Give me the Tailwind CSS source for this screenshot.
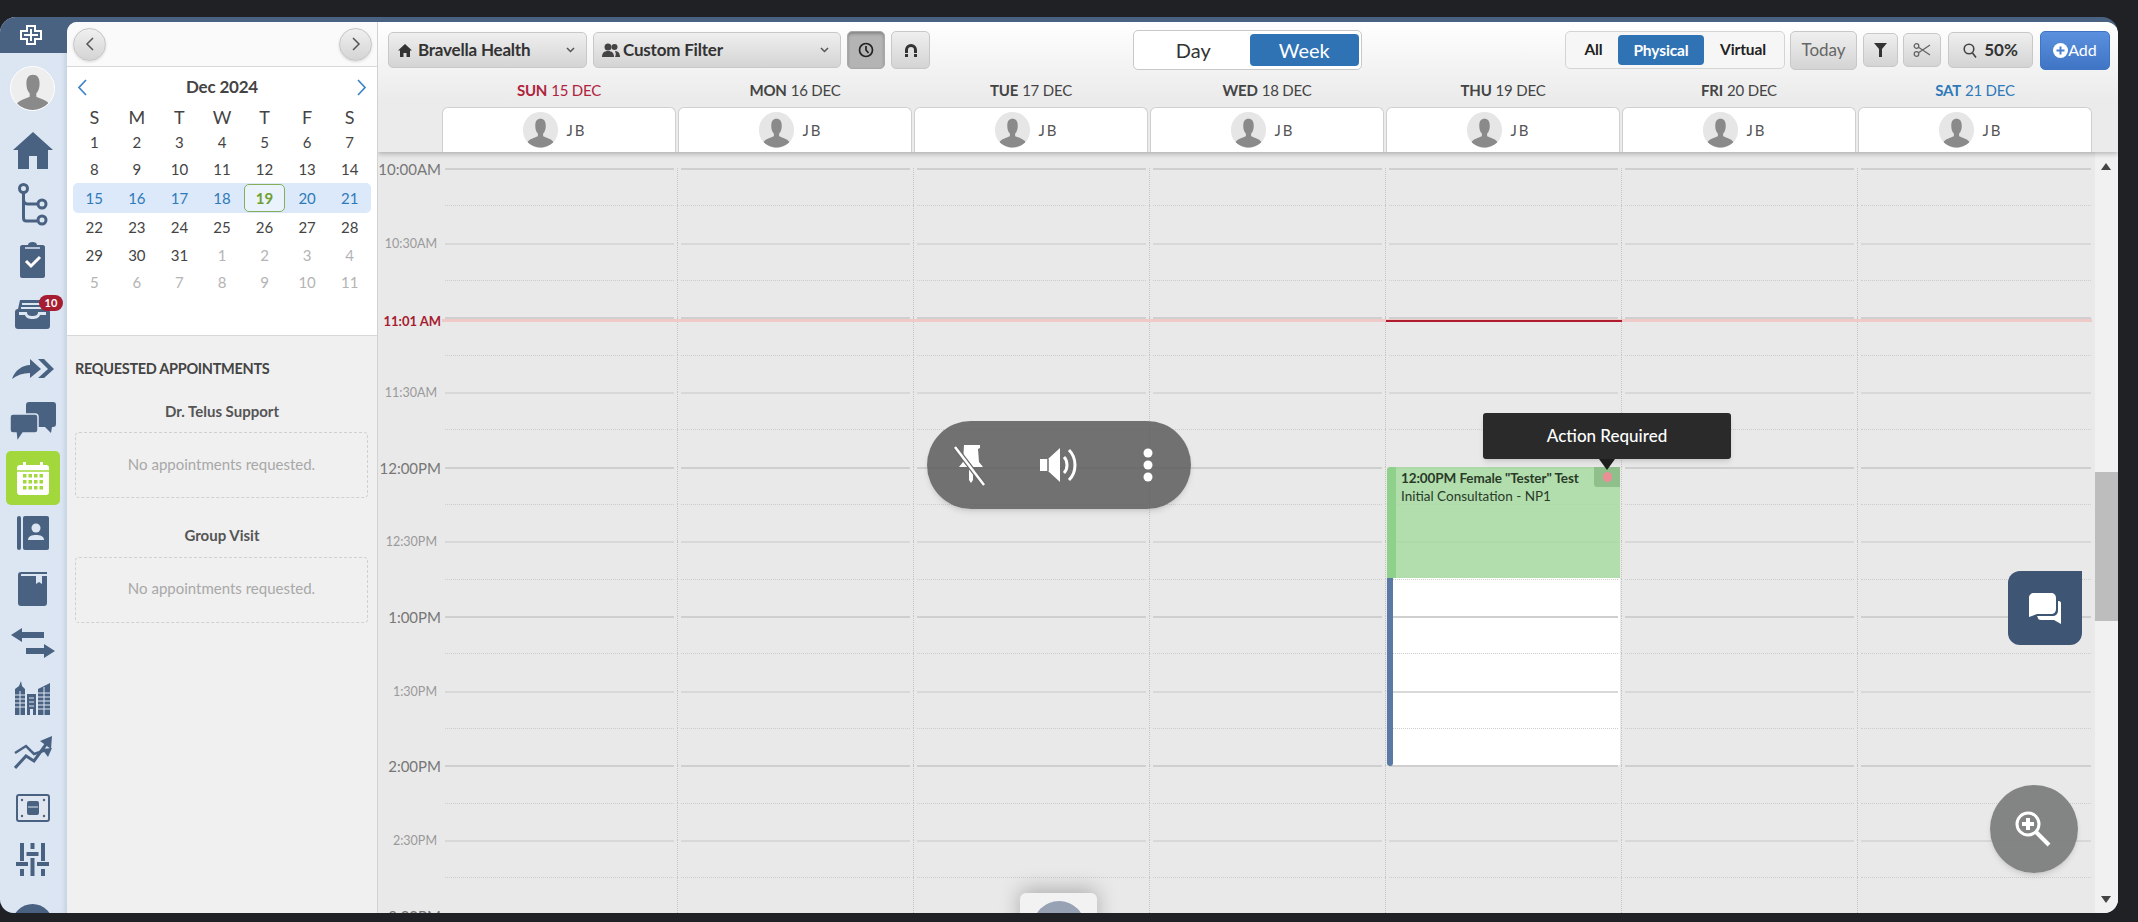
<!DOCTYPE html>
<html lang="en">
<head>
    <meta charset="UTF-8">
    <title>Schedule</title>
    <script src="https://cdn.jsdelivr.net/npm/@tailwindcss/browser@4"></script>
</head>
<body class="bg-[#1f2125] h-[922px] overflow-hidden font-[family-name:Lato,sans-serif] text-[#444]">

    <svg class="hidden">
        <symbol id="person" viewBox="0 0 40 40">
            <path d="M20 7c4 0 6 3 6 8 0 4-1 7-3 9v3c4 2 10 3 12 7-3 3-9 6-15 6S8 37 5 34c2-4 8-5 12-7v-3c-2-2-3-5-3-9 0-5 2-8 6-8z" fill="#8a8a8a"/>
        </symbol>
    </svg>

    <div class="pt-[17px] w-[2118px]">
        <div class="flex h-[896px] w-[2118px] rounded-t-[16px] rounded-b-[14px] overflow-hidden bg-[#4a6282]">

            <!-- Sidebar -->
            <div class="w-[67px] shrink-0 flex flex-col items-center pr-[2px] bg-[#dce6f3] overflow-hidden shadow-[inset_-5px_0_6px_-4px_#b9c6d8]">
                <div class="w-[67px] h-[36px] shrink-0 -mr-[2px] bg-[#4a6282] flex items-center justify-center pr-[6px]">
                    <svg width="22" height="20" viewBox="0 0 22 20"><path d="M7 1h8v5h6v8h-6v5H7v-5H1V6h6z" fill="none" stroke="#fff" stroke-width="2"/><path d="M11 4v12M4 10h14" stroke="#fff" stroke-width="2"/></svg>
                </div>
                <div class="mt-[13px] w-[45px] h-[45px] shrink-0 rounded-full bg-[#eeeeee] border border-white overflow-hidden">
                    <svg width="44" height="44"><use href="#person"/></svg>
                </div>
                <svg class="mt-[21px] shrink-0" width="40" height="37" viewBox="0 0 40 37"><path d="M20 0l20 18h-5v19H24V24h-8v13H5V18H0z" fill="#4a6282"/></svg>
                <svg class="mt-[14px] shrink-0" width="30" height="43" viewBox="0 0 30 43" fill="none" stroke="#4a6282" stroke-width="3"><circle cx="5.500" cy="5.500" r="4"/><circle cx="24" cy="21" r="4"/><circle cx="24" cy="37" r="4"/><path d="M5.500 10v25c0 2 1 3 3 3h11M5.500 16c0 3 1 5 4 5h10.500"/></svg>
                <svg class="mt-[16px] shrink-0" width="25" height="36" viewBox="0 0 25 36"><path d="M2 3h6c0-2 2-3 4.500-3S17 1 17 3h6c1 0 2 1 2 2v29c0 1-1 2-2 2H2c-1 0-2-1-2-2V5c0-1 1-2 2-2z" fill="#4a6282"/><path d="M6 19l5 5 9-9" fill="none" stroke="#fff" stroke-width="3"/><path d="M5 6h15" stroke="#dce6f3" stroke-width="1.500"/></svg>
                <div class="relative mt-[22px] shrink-0 w-[35px] h-[29px]">
                    <svg width="35" height="29" viewBox="0 0 35 29"><path d="M5 0h25l2 9c2 0 3 1 3 3v14c0 2-1 3-3 3H3c-2 0-3-1-3-3V12c0-2 1-3 3-3z" fill="#4a6282"/><path d="M7 4h21M6 8h23" stroke="#dce6f3" stroke-width="1.800"/><path d="M4 12h8c0 3 2 4 5.500 4s5.500-1 5.500-4h8v3H25c-1 3-4 4-7.500 4S11 18 10 15H4z" fill="#dce6f3"/></svg>
                    <span class="absolute left-[24px] top-[-5px] w-[24px] h-[16px] rounded-full bg-[#a61c30] text-white text-[11px] font-bold leading-[16px] text-center">10</span>
                </div>
                <svg class="mt-[30px] shrink-0" width="42" height="20" viewBox="0 0 42 20"><path d="M0 20C3 11 11 6 18 6V0l11 10-11 9v-5C11 14 5 16 0 20z" fill="#4a6282"/><path d="M26 0h6l10 10-10 9h-6l10-9z" fill="#4a6282"/></svg>
                <svg class="mt-[23px] shrink-0" width="46" height="41" viewBox="0 0 46 41"><path d="M19 0h24c2 0 3 1 3 3v19c0 2-1 3-3 3h-1l-1 6-6-6H19c-2 0-3-1-3-3V3c0-2 1-3 3-3z" fill="#4a6282"/><path d="M3 12h22c2 0 3 1 3 3v13c0 2-1 3-3 3H13l-6 9-1-9H3c-2 0-3-1-3-3V15c0-2 1-3 3-3z" fill="#4a6282" stroke="#dce6f3" stroke-width="1.500"/></svg>
                <div class="mt-[8px] w-[54px] h-[54px] shrink-0 rounded-[5px] bg-[#a2d83c] flex items-center justify-center">
                    <svg width="32" height="33" viewBox="0 0 32 33"><rect y="3" width="32" height="30" rx="3" fill="#fff"/><rect x="6" width="3" height="6" fill="#fff"/><rect x="23" width="3" height="6" fill="#fff"/><path d="M0 9h32" stroke="#a2d83c" stroke-width="1.500"/><g fill="#a2d83c"><rect x="6" y="12" width="3.500" height="3.500"/><rect x="11.500" y="12" width="3.500" height="3.500"/><rect x="17" y="12" width="3.500" height="3.500"/><rect x="22.500" y="12" width="3.500" height="3.500"/><rect x="6" y="18" width="3.500" height="3.500"/><rect x="11.500" y="18" width="3.500" height="3.500"/><rect x="17" y="18" width="3.500" height="3.500"/><rect x="22.500" y="18" width="3.500" height="3.500"/><rect x="6" y="24" width="3.500" height="3.500"/><rect x="11.500" y="24" width="3.500" height="3.500"/><rect x="17" y="24" width="3.500" height="3.500"/><rect x="22.500" y="24" width="3.500" height="3.500"/></g></svg>
                </div>
                <svg class="mt-[11px] shrink-0" width="32" height="34" viewBox="0 0 32 34"><rect width="4" height="34" rx="2" fill="#4a6282"/><rect x="6" width="26" height="34" rx="2" fill="#4a6282"/><circle cx="19" cy="12" r="4.500" fill="#dce6f3"/><path d="M11 24c0-4 4-5 8-5s8 1 8 5z" fill="#dce6f3"/></svg>
                <svg class="mt-[22px] shrink-0" width="29" height="34" viewBox="0 0 29 34"><path d="M3 0h26v2H4c-1 0-1 0-1 1v1h26v27c0 2-1 3-3 3H3c-2 0-3-1-3-3V3c0-2 1-3 3-3z" fill="#4a6282"/><path d="M18 4h6v8l-3-2-3 2z" fill="#dce6f3"/></svg>
                <svg class="mt-[22px] shrink-0" width="44" height="30" viewBox="0 0 44 30" fill="#4a6282"><path d="M0 7l11-7v4h22v6H11v4zM44 23l-11-7v4H15v6h18v4z"/></svg>
                <svg class="mt-[23px] shrink-0" width="35" height="34" viewBox="0 0 35 34" fill="#4a6282"><path d="M6 0l1 5 3 3v26H0V8l4-3zM12 13h9v21h-3v-6h-3v6h-3zM23 8l12-6v32H23z"/><g stroke="#dce6f3" stroke-width="1"><path d="M0 14h10M0 18h10M0 22h10M0 26h10M5 10v24M14 17h5M14 21h5M14 25h5M23 12h12M23 16h12M23 20h12M23 24h12M23 28h12M29 6v28"/></g></svg>
                <svg class="mt-[21px] shrink-0" width="38" height="33" viewBox="0 0 38 33" fill="none" stroke="#4a6282" stroke-width="3"><path d="M1 32l11-12 8 5 13-18"/><path d="M1 17l11-7 8 8 12-4" stroke-width="2.500"/><path d="M26 5l12-5-1 13zM28 13l10-1-4 9z" fill="#4a6282" stroke="none"/></svg>
                <svg class="mt-[25px] shrink-0" width="34" height="28" viewBox="0 0 34 28"><rect x="1" y="1" width="32" height="26" rx="2" fill="#dfe6ef" stroke="#4a6282" stroke-width="2"/><rect x="11" y="7" width="12" height="14" rx="2" fill="#4a6282"/><path d="M12 13h10" stroke="#dfe6ef"/><g fill="#4a6282"><circle cx="6" cy="6" r="1.200"/><circle cx="28" cy="6" r="1.200"/><circle cx="6" cy="22" r="1.200"/><circle cx="28" cy="22" r="1.200"/></g></svg>
                <svg class="mt-[21px] shrink-0" width="33" height="33" viewBox="0 0 33 33" fill="#4a6282"><rect x="4" width="4" height="18"/><rect x="0" y="19" width="12" height="4"/><rect x="4" y="26" width="4" height="7"/><rect x="14.500" width="4" height="6"/><rect x="10.500" y="9" width="12" height="4"/><rect x="14.500" y="15" width="4" height="18"/><rect x="25" width="4" height="18"/><rect x="21" y="19" width="12" height="4"/><rect x="25" y="26" width="4" height="7"/></svg>
                <div class="mt-[28px] w-[41px] h-[41px] shrink-0 rounded-full bg-[#4a6282]"></div>
            </div>

            <!-- Left panel -->
            <div class="w-[311px] shrink-0 mt-[5px] rounded-tl-[10px] bg-[#f0f0f0] border-r border-[#d2d2d2] overflow-hidden">
                <div class="h-[45px] flex items-center justify-between pl-[6px] pr-[5px] bg-[#fafafa] border-b border-[#d8d8d8]">
                    <button class="w-[33px] h-[33px] rounded-full bg-gradient-to-b from-[#f0f0f0] to-[#d4d4d4] border border-[#c4c4c4] flex items-center justify-center shadow-sm">
                        <svg width="10" height="16" viewBox="0 0 10 16" fill="none" stroke="#555" stroke-width="1.500"><path d="M8 2L2 8l6 6"/></svg>
                    </button>
                    <button class="w-[33px] h-[33px] rounded-full bg-gradient-to-b from-[#f0f0f0] to-[#d4d4d4] border border-[#c4c4c4] flex items-center justify-center shadow-sm">
                        <svg width="10" height="16" viewBox="0 0 10 16" fill="none" stroke="#555" stroke-width="1.500"><path d="M2 2l6 6-6 6"/></svg>
                    </button>
                </div>
                <div class="h-[269px] bg-white border-b border-[#d8d8d8] px-[6px]">
                    <div class="h-[38px] pt-[2px] flex items-center justify-between px-[4px]">
                        <svg width="11" height="17" viewBox="0 0 11 17" fill="none" stroke="#3d85c6" stroke-width="1.700"><path d="M9 1L2 8.500 9 16"/></svg>
                        <span class="text-[17px] font-bold text-[#444] tracking-[-0.2px]">Dec 2024</span>
                        <svg width="11" height="17" viewBox="0 0 11 17" fill="none" stroke="#3d85c6" stroke-width="1.700"><path d="M2 1l7 7.500L2 16"/></svg>
                    </div>
                    <div class="grid grid-cols-7 w-[298px] text-center text-[18px] leading-[24px] text-[#444] h-[24px]">
                        <span>S</span><span>M</span><span>T</span><span>W</span><span>T</span><span>F</span><span>S</span>
                    </div>
                    <div class="grid grid-cols-7 w-[298px] text-center text-[15px] leading-[27px] h-[27px] text-[#444]">
                        <span>1</span><span>2</span><span>3</span><span>4</span><span>5</span><span>6</span><span>7</span>
                    </div>
                    <div class="grid grid-cols-7 w-[298px] text-center text-[15px] leading-[27px] h-[27px] text-[#444]">
                        <span>8</span><span>9</span><span>10</span><span>11</span><span>12</span><span>13</span><span>14</span>
                    </div>
                    <div class="grid grid-cols-7 w-[298px] text-center text-[15px] leading-[30px] h-[30px] text-[#2f7ab8] bg-[#dce9fa] rounded-[5px]">
                        <span>15</span><span>16</span><span>17</span><span>18</span>
                        <span class="mx-[1px] h-[28px] mt-[1px] leading-[26px] rounded-[5px] border border-[#85ad5c] bg-white/40 font-bold text-[#6fa02f]">19</span>
                        <span>20</span><span>21</span>
                    </div>
                    <div class="grid grid-cols-7 w-[298px] text-center text-[15px] leading-[28px] h-[28px] text-[#444]">
                        <span>22</span><span>23</span><span>24</span><span>25</span><span>26</span><span>27</span><span>28</span>
                    </div>
                    <div class="grid grid-cols-7 w-[298px] text-center text-[15px] leading-[28px] h-[28px] text-[#444]">
                        <span>29</span><span>30</span><span>31</span><span class="text-[#b4b4b4]">1</span><span class="text-[#b4b4b4]">2</span><span class="text-[#b4b4b4]">3</span><span class="text-[#b4b4b4]">4</span>
                    </div>
                    <div class="grid grid-cols-7 w-[298px] text-center text-[15px] leading-[26px] h-[26px] text-[#b4b4b4]">
                        <span>5</span><span>6</span><span>7</span><span>8</span><span>9</span><span>10</span><span>11</span>
                    </div>
                </div>
                <div class="px-[8px] pt-[24px]">
                    <h3 class="text-[14.500px] leading-[18px] font-bold text-[#444] tracking-[-0.3px] whitespace-nowrap">REQUESTED APPOINTMENTS</h3>
                    <h4 class="mt-[24px] text-[15px] leading-[18px] font-bold text-[#555] text-center">Dr. Telus Support</h4>
                    <div class="mt-[12px] h-[66px] w-[293px] border border-dashed border-[#d0d0d0] rounded-[4px] flex items-center justify-center text-[15px] text-[#a8a8a8] pb-[2px]">No appointments requested.</div>
                    <h4 class="mt-[28px] text-[15px] leading-[18px] font-bold text-[#555] text-center">Group Visit</h4>
                    <div class="mt-[13px] h-[66px] w-[293px] border border-dashed border-[#d0d0d0] rounded-[4px] flex items-center justify-center text-[15px] text-[#a8a8a8] pb-[3px]">No appointments requested.</div>
                </div>
            </div>

            <!-- Main -->
            <div class="flex-1 mt-[5px] flex flex-col bg-[#ebebeb] min-w-0 rounded-tr-[12px] overflow-hidden">
                <div class="h-[130px] shrink-0 bg-gradient-to-b from-white from-0% to-[#ebebeb] to-60% relative z-10 shadow-[0_2px_5px_rgba(0,0,0,0.25)]">
                    <div class="h-[56px] pl-[10px] flex items-center text-[#333]">
                        <button class="w-[199px] h-[36px] rounded-[5px] border border-[#c8c8c8] bg-gradient-to-b from-[#efefef] to-[#d4d4d4] flex items-center pl-[9px] pr-[11px] text-[17px] font-bold tracking-[-0.2px]">
                            <svg class="mr-[6px]" width="14" height="13" viewBox="0 0 14 13" fill="#333"><path d="M7 0l7 6.500h-2V13H8.500V9h-3v4H2V6.500H0z"/></svg>
                            Bravella Health
                            <svg class="ml-auto" width="9" height="6" viewBox="0 0 9 6" fill="none" stroke="#555" stroke-width="1.500"><path d="M1 1l3.500 3.500L8 1"/></svg>
                        </button>
                        <button class="ml-[6px] w-[248px] h-[36px] rounded-[5px] border border-[#c8c8c8] bg-gradient-to-b from-[#efefef] to-[#d4d4d4] flex items-center pl-[8px] pr-[11px] text-[17px] font-bold tracking-[-0.2px]">
                            <svg class="mr-[3px]" width="18" height="14" viewBox="0 0 18 14" fill="#444"><circle cx="6" cy="4" r="3.500"/><path d="M0 14c0-4 2-6 6-6s6 2 6 6z"/><circle cx="12.500" cy="4" r="3"/><path d="M13 14h5c0-4-2-6-5-6 1 2 1 4 0 6z"/></svg>
                            Custom Filter
                            <svg class="ml-auto" width="9" height="6" viewBox="0 0 9 6" fill="none" stroke="#555" stroke-width="1.500"><path d="M1 1l3.500 3.500L8 1"/></svg>
                        </button>
                        <button class="ml-[6px] w-[38px] h-[38px] rounded-[5px] border border-[#a8a8a8] bg-[#b4b4b4] shadow-[inset_0_2px_3px_rgba(0,0,0,0.25)] flex items-center justify-center">
                            <svg width="16" height="16" viewBox="0 0 16 16" fill="none" stroke="#222" stroke-width="1.700"><circle cx="8" cy="8" r="6.500"/><path d="M8 4v4l2.500 3"/></svg>
                        </button>
                        <button class="ml-[6px] w-[39px] h-[38px] rounded-[5px] border border-[#c8c8c8] bg-gradient-to-b from-[#efefef] to-[#d4d4d4] flex items-center justify-center">
                            <svg width="14" height="15" viewBox="0 0 14 15" fill="none"><path d="M2.500 10V7a4.500 4.500 0 019 0v3" stroke="#333" stroke-width="3"/><path d="M1 11h3v3H1zM10 11h3v3h-3z" fill="#333"/></svg>
                        </button>
                        <div class="ml-[203px] w-[229px] h-[40px] rounded-[5px] border border-[#c8c8c8] bg-white flex items-center pl-[3px] pr-[2px] text-[20px]">
                            <span class="w-[113px] text-center text-[#333]">Day</span>
                            <span class="w-[110px] h-[32px] leading-[32px] rounded-[4px] bg-[#2f73b5] text-center text-white">Week</span>
                        </div>
                        <div class="ml-[203px] w-[220px] h-[38px] rounded-[5px] border border-[#d4d4d4] bg-[#f6f6f6] flex items-center pl-[3px] text-[15.500px] font-bold text-[#222] tracking-[-0.1px]">
                            <span class="w-[49px] text-center">All</span>
                            <span class="w-[86px] h-[30px] leading-[30px] rounded-[4px] bg-[#2f73b5] text-center text-white">Physical</span>
                            <span class="w-[78px] text-center">Virtual</span>
                        </div>
                        <button class="ml-[5px] w-[67px] h-[39px] rounded-[5px] border border-[#c8c8c8] bg-gradient-to-b from-[#efefef] to-[#d4d4d4] text-[17px] text-[#666]">Today</button>
                        <button class="ml-[6px] w-[35px] h-[34px] rounded-[5px] border border-[#c8c8c8] bg-gradient-to-b from-[#efefef] to-[#d4d4d4] flex items-center justify-center">
                            <svg width="13" height="14" viewBox="0 0 13 14" fill="#333"><path d="M0 0h13L8 6v8H5V6z"/></svg>
                        </button>
                        <button class="ml-[5px] w-[38px] h-[34px] rounded-[5px] border border-[#c8c8c8] bg-gradient-to-b from-[#efefef] to-[#d4d4d4] flex items-center justify-center">
                            <svg width="18" height="14" viewBox="0 0 18 14" fill="none" stroke="#666" stroke-width="1.300"><circle cx="3.500" cy="3" r="2.300"/><circle cx="3.500" cy="11" r="2.300"/><path d="M5.500 4.200L17 12M5.500 9.800L17 2"/></svg>
                        </button>
                        <button class="ml-[7px] w-[85px] h-[36px] rounded-[5px] border border-[#c8c8c8] bg-gradient-to-b from-[#efefef] to-[#d4d4d4] flex items-center justify-center text-[17px] font-bold text-[#333]">
                            <svg class="mr-[7px]" width="14" height="15" viewBox="0 0 14 15" fill="none" stroke="#444" stroke-width="1.600"><circle cx="6" cy="6" r="4.800"/><path d="M9.500 10l3.500 4.500"/></svg>
                            50%
                        </button>
                        <button class="ml-[7px] w-[70px] h-[39px] rounded-[5px] border border-[#3f75c4] bg-gradient-to-b from-[#5a90de] to-[#3f75c4] flex items-center justify-center text-[16px] text-white">
                            <svg width="15" height="15" viewBox="0 0 15 15"><circle cx="7.500" cy="7.500" r="7.500" fill="#fff"/><path d="M7.500 3.500v8M3.500 7.500h8" stroke="#4a80d0" stroke-width="2"/></svg>
                            Add
                        </button>
                    </div>
                    <div class="h-[29px] pl-[63px] pb-[5px] flex text-[15px] tracking-[-0.2px] text-[#444]">
                        <div class="w-[236px] flex items-center justify-center gap-[4px] text-[#b0233c]"><b>SUN</b> 15 DEC</div>
                        <div class="w-[236px] flex items-center justify-center gap-[4px]"><b>MON</b> 16 DEC</div>
                        <div class="w-[236px] flex items-center justify-center gap-[4px]"><b>TUE</b> 17 DEC</div>
                        <div class="w-[236px] flex items-center justify-center gap-[4px]"><b>WED</b> 18 DEC</div>
                        <div class="w-[236px] flex items-center justify-center gap-[4px]"><b>THU</b> 19 DEC</div>
                        <div class="w-[236px] flex items-center justify-center gap-[4px]"><b>FRI</b> 20 DEC</div>
                        <div class="w-[236px] flex items-center justify-center gap-[4px] text-[#2f7ab8]"><b>SAT</b> 21 DEC</div>
                    </div>
                    <div id="tabs" class="h-[45px] pl-[64px] flex gap-[2px]"></div>
                </div>

                <div class="flex-1 flex min-h-0">
                    <div id="grid" class="relative w-[1717px] shrink-0 pt-[16px] overflow-hidden bg-[#e9e9e9]">
                        <!-- empty slot sits under the grid lines -->
                        <div class="absolute left-[1009px] top-[426px] w-[233px] h-[188px] bg-white rounded-b-[3px]"></div>

                        <div id="rows" class="relative"></div>

                        <!-- now line -->
                        <div class="absolute left-[64px] top-[167px] w-[1650px] h-[3px] bg-[#f0c9c9]"></div>
                        <div class="absolute left-[1008px] top-[168px] w-[236px] h-[2px] bg-[#b01c2e]"></div>

                        <div class="absolute left-[1009px] top-[426px] w-[6px] h-[188px] bg-[#5a7aa5] rounded-b-[3px]"></div>

                        <!-- appointment -->
                        <div class="absolute left-[1009px] top-[315px] w-[233px] h-[111px] bg-[#a4db9f]/80 rounded-t-[3px] border-l-[9px] border-[#8fd08a] pl-[5px] pt-[2px] text-[#2a3a28]">
                            <div class="text-[13.500px] leading-[18px] font-bold tracking-[-0.1px] whitespace-nowrap">12:00PM Female "Tester" Test</div>
                            <div class="text-[13.500px] leading-[18px] whitespace-nowrap">Initial Consultation - NP1</div>
                        </div>
                        <div class="absolute left-[1216px] top-[315px] w-[26px] h-[20px] bg-[#8fc08c] rounded-bl-[3px] flex items-center justify-center">
                            <span class="w-[9px] h-[10px] rounded-full bg-[#ea8f93]"></span>
                        </div>

                        <!-- tooltip -->
                        <div class="absolute left-[1105px] top-[261px] w-[248px] h-[46px] rounded-[3px] bg-[#2a2a2a] text-white text-[17px] font-medium flex items-center justify-center shadow-md">Action Required</div>
                        <div class="absolute left-[1221px] top-[307px] w-0 h-0 border-x-[8px] border-x-transparent border-t-[11px] border-t-[#1e1e1e]"></div>

                        <!-- floating pill -->
                        <div class="absolute left-[549px] top-[269px] w-[264px] h-[88px] rounded-[44px] bg-[#5c5c5c]/85 shadow-md flex items-center">
                            <svg class="ml-[25px]" width="36" height="42" viewBox="0 0 36 42" fill="#fff"><path d="M12 1h16v3l-2 1 1 13 4 5H21v13l-2 3-2-3V23H7l4-5z"/><path d="M3 3l29 38" stroke="#6a6a6a" stroke-width="5"/><path d="M3 3l29 38" stroke="#fff" stroke-width="2.500"/></svg>
                            <svg class="ml-[52px]" width="38" height="36" viewBox="0 0 38 36"><path d="M0 12h8L20 1v34L8 24H0z" fill="#fff"/><path d="M8 12v12" stroke="#6a6a6a" stroke-width="1.500"/><path d="M24 10c4 4 4 12 0 16M29 3c8 8 8 22 0 30" fill="none" stroke="#fff" stroke-width="3"/></svg>
                            <svg class="ml-[65px]" width="10" height="34" viewBox="0 0 10 34" fill="#fff"><circle cx="5" cy="5" r="4.500"/><circle cx="5" cy="17" r="4.500"/><circle cx="5" cy="29" r="4.500"/></svg>
                        </div>

                        <!-- chat button -->
                        <div class="absolute left-[1630px] top-[419px] w-[74px] h-[74px] rounded-[12px] rounded-tr-none bg-[#3f5574] flex items-center justify-center">
                            <svg width="32" height="31" viewBox="0 0 32 31"><path d="M5 0h17c3 0 5 2 5 5v11c0 3-2 5-5 5H8l-8 3V5c0-3 2-5 5-5z" fill="#fff"/><path d="M29 8h1c1 0 2 1 2 2v21l-7-4H12c-2 0-3-1-3-2l-1-2h15c4 0 6-2 6-6z" fill="#fff"/></svg>
                        </div>

                        <!-- zoom button -->
                        <div class="absolute left-[1612px] top-[633px] w-[88px] h-[88px] rounded-full bg-[#7d8080]/95 shadow-md flex items-center justify-center">
                            <svg class="mr-[2px]" width="36" height="36" viewBox="0 0 36 36" fill="none"><circle cx="13" cy="13" r="11" stroke="#fff" stroke-width="3"/><path d="M13 7v12M7 13h12" stroke="#fff" stroke-width="4"/><path d="M21 21l13 13" stroke="#fff" stroke-width="4"/></svg>
                        </div>

                        <!-- bottom tab -->
                        <div class="absolute left-[642px] top-[741px] w-[77px] h-[40px] rounded-[6px] bg-[#f2f2f2] shadow-[0_-4px_20px_rgba(0,0,0,0.25)] overflow-hidden flex justify-center">
                            <div class="mt-[8px] w-[52px] h-[52px] rounded-full bg-[#97a3b5]"></div>
                        </div>
                    </div>

                    <!-- scrollbar -->
                    <div class="w-[23px] shrink-0 bg-[#f1f1f1] relative">
                        <div class="absolute left-[6px] top-[11px] w-0 h-0 border-x-[5px] border-x-transparent border-b-[7px] border-b-[#444]"></div>
                        <div class="absolute left-0 top-[320px] w-full h-[149px] bg-[#bdbdbd]"></div>
                        <div class="absolute left-[6px] top-[744px] w-0 h-0 border-x-[5px] border-x-transparent border-t-[7px] border-t-[#444]"></div>
                    </div>
                </div>
            </div>
        </div>
    </div>

    <script>
        // Provider tabs, all seven are the same
        const tabs = document.getElementById('tabs');
        for (let d = 0; d < 7; d++) {
            tabs.innerHTML += `<div class="w-[234px] h-[45px] bg-white rounded-t-[6px] border border-b-0 border-[#d0d0d0] flex items-center justify-center gap-[8px] pr-[8px]">
                <span class="w-[35px] h-[36px] rounded-full bg-[#e6e6e6] overflow-hidden"><svg width="35" height="36"><use href="#person"/></svg></span>
                <span class="text-[15px] tracking-[2px] text-[#555]">JB</span>
            </div>`;
        }

        // Time grid: 15 minute rows from 10:00AM
        const labels = ['10:00AM', '10:30AM', '', '11:30AM', '12:00PM', '12:30PM', '1:00PM', '1:30PM', '2:00PM', '2:30PM', '3:00PM'];
        let html = '';
        for (let i = 0; i < 21; i++) {
            let line = '<div class="border-t border-dotted border-[#cccccc]"></div>';
            if (i % 4 === 0) line = '<div class="h-[2px] bg-[#cfcfcf]"></div>';
            else if (i % 2 === 0) line = '<div class="h-[2px] bg-[#d8d8d8]"></div>';

            let label = '';
            if (i === 4) {
                label = '<span class="block pr-[1px] -mt-[3px] text-[13px] leading-[14px] font-bold text-[#a61c30]">11:01 AM</span>';
            } else if (i % 4 === 0) {
                label = `<span class="block text-[15px] leading-[16px] -mt-[7px] pr-[1px] text-[#777]">${labels[i / 2]}</span>`;
            } else if (i % 2 === 0) {
                label = `<span class="block text-[12.500px] leading-[14px] -mt-[6px] pr-[5px] text-[#9a9a9a]">${labels[i / 2]}</span>`;
            }

            let cells = '';
            for (let d = 0; d < 7; d++) {
                cells += d < 6
                    ? `<div class="w-[236px] h-full px-[3px] border-r border-dotted border-[#c4c4c4]">${line}</div>`
                    : `<div class="w-[236px] h-full px-[3px]">${line}</div>`;
            }
            html += `<div class="flex h-[37.33px]"><div class="w-[64px] text-right whitespace-nowrap">${label}</div>${cells}</div>`;
        }
        document.getElementById('rows').innerHTML = html;
    </script>

</body>
</html>
